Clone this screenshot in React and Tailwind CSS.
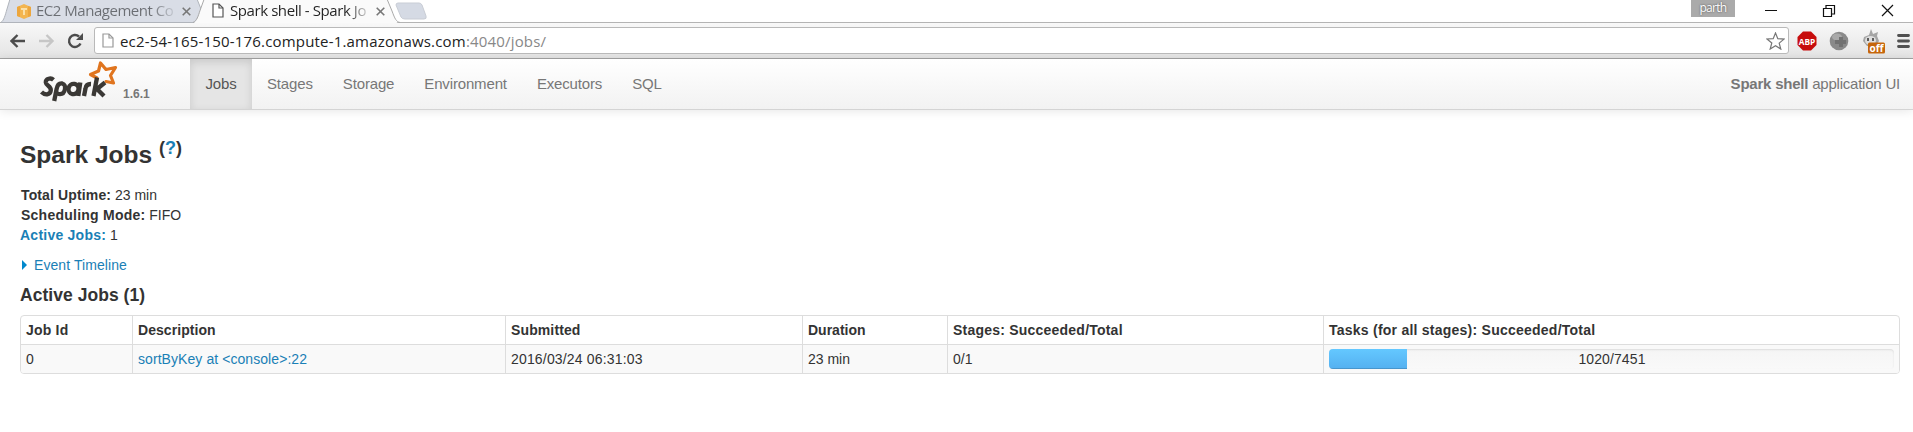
const navItems = ["Stages", "Storage", "Environment", "Executors", "SQL"];

function PageIcon({ className }) {
  return (
    <svg className={className} width="12" height="15" viewBox="0 0 12 15" fill="#fff" stroke="currentColor" strokeWidth="1.2">
      <path d="M1 1h6l4 4v9H1z" />
      <path d="M7 1v4h4" fill="none" />
    </svg>
  );
}

function CloseX() {
  return (
    <svg width="9" height="9" viewBox="0 0 9 9" stroke="#777" strokeWidth="1.6">
      <path d="M.7 .7L8.3 8.3M8.3 .7L.7 8.3" />
    </svg>
  );
}

function TabStrip() {
  return (
    <div className="relative flex h-[23px] items-start bg-white">
      <svg className="absolute left-0 top-0" width="1913" height="23" viewBox="0 0 1913 23">
        <path d="M0 22.5H1913" stroke="#b4b4b4" />
        <path d="M1 22.5C4 20 5 16 7 9L10-1H197l4 10c2 8 3 11 7 13.5z" fill="#d9dde6" stroke="#b0b4bb" />
        <path d="M193 23.5c4-2 5-6 7-12l4-12H387l5 12c3 9 4 11 7 12z" fill="#fafafa" />
        <path d="M193 22.5c4-2 5-6 7-12l4-11M387-1l5 12c3 8 4 10.500 8 11.500" fill="none" stroke="#a9a9a9" />
        <path d="M396 5q0-2 2-2h21q2 0 3 2l4 11q1 3-2 3h-19q-3 0-4-2z" fill="#d5dae4" stroke="#c9cdd5" />
      </svg>
      <div className="relative ml-[16px] mt-[4px] flex h-[14px] items-center">
        <svg width="16" height="15" viewBox="0 0 16 15">
          <path d="M1 3l7-3 7 3v9l-7 3-7-3z" fill="#f3b550" />
          <path d="M1 3l3-1v11l-3-1zM15 3l-3-1v11l3-1z" fill="#eda63c" />
          <path d="M5 4h6v2H9v5H7V6H5z" fill="#fbe0a8" />
        </svg>
      </div>
      <div className="relative ml-[4px] h-[22px] w-[143px] whitespace-nowrap bg-gradient-to-r from-[#6b6e73] from-80% to-transparent bg-clip-text font-['Open_Sans',sans-serif] text-[15px] leading-[21px] tracking-[-0.48px] text-transparent">EC2 Management Co</div>
      <div className="relative ml-[3px] mt-[7px]"><CloseX /></div>
      <PageIcon className="relative ml-[21px] mt-[3px] text-[#555]" />
      <div className="relative ml-[6px] h-[22px] w-[139px] whitespace-nowrap bg-gradient-to-r from-[#222] from-84% to-transparent to-102% bg-clip-text font-['Open_Sans',sans-serif] text-[15px] leading-[21px] tracking-[-0.42px] text-transparent">Spark shell - Spark Jo</div>
      <div className="relative ml-[7px] mt-[7px]"><CloseX /></div>
      <div className="relative ml-auto mr-[178px] flex h-[17px] w-[44px] items-start justify-center bg-[#aaa] font-['Open_Sans',sans-serif] text-[12px] leading-[16px] tracking-[-0.7px] text-white [text-shadow:0_0_2px_#444]">parth</div>
      <svg className="absolute right-[19px] top-[4px]" width="130" height="14" viewBox="0 0 130 14" fill="none" stroke="#111" strokeWidth="1.2">
        <path d="M1 6.500h12M59.500 4.500h8v8h-8zM62 4V1.500h8.500V10H68" />
        <path d="M118 1l11 11M129 1l-11 11" />
      </svg>
    </div>
  );
}

function Toolbar() {
  return (
    <div className="flex h-[36px] items-center border-b border-[#a3a3a3] bg-gradient-to-b from-[#f8f8f8] to-[#e4e4e4]">
      <svg className="ml-[10px]" width="74" height="18" viewBox="0 0 74 18" fill="none" strokeWidth="2.4">
        <path d="M15 9H2M7.500 3L1.500 9l6 6" stroke="#4c4c4c" />
        <path d="M29 9h13M36.500 3l6 6-6 6" stroke="#c6c6c6" />
        <path d="M70.500 11.500A6 6 0 1 1 69 4.500" stroke="#4c4c4c" />
        <path d="M73 1v7h-7z" fill="#4c4c4c" />
      </svg>
      <div className="ml-[10px] flex h-[27px] w-[1695px] items-center rounded-[3px] border border-[#b9b9b9] bg-white pl-[7px] pr-[3px]">
        <PageIcon className="text-[#999]" />
        <div className="ml-[6px] flex-1 whitespace-nowrap font-['Open_Sans',sans-serif] text-[15px] leading-[24px] tracking-[0.18px] text-[#222]">
          ec2-54-165-150-176.compute-1.amazonaws.com<span className="text-[#888]">:4040/jobs/</span>
        </div>
        <svg width="19" height="18" viewBox="0 0 19 18" fill="#fff" stroke="#777" strokeWidth="1.2">
          <path d="M9.500 1l2.300 5.700 6.200.4-4.800 4 1.600 6-5.300-3.400L4.200 17l1.600-6-4.800-4 6.200-.3z" />
        </svg>
      </div>
      <svg className="ml-[8px]" width="20" height="20" viewBox="0 0 20 20">
        <path d="M6 .5h8L19.500 6v8L14 19.500H6L.5 14V6z" fill="#c70d0d" />
        <text x="10" y="13.5" textAnchor="middle" fill="#fff" fontFamily="Open Sans, sans-serif" fontWeight="700" fontSize="9" textLength="16.5" lengthAdjust="spacingAndGlyphs">ABP</text>
      </svg>
      <svg className="ml-[12px]" width="20" height="20" viewBox="0 0 20 20">
        <circle cx="10" cy="10" r="9.3" fill="#8a8a8a" />
        <ellipse cx="8" cy="6" rx="5" ry="3.5" fill="#a9a9a9" />
        <path d="M10 6h4v3h3v4h-3v3h-4v-3H6V9h4z" fill="#727272" />
      </svg>
      <svg className="ml-[13px]" width="24" height="26" viewBox="0 0 24 26">
        <path d="M2 9l5-2 2-6 2 5 5-2-1 4 2 5-3 5H5L1 13z" fill="#a5a5a5" />
        <ellipse cx="8.500" cy="12.500" rx="5.500" ry="4.500" fill="#dedede" />
        <path d="M6 10v3M11 10v3" stroke="#333" strokeWidth="1.5" />
        <rect x="6" y="14.500" width="17" height="11" rx="1.500" fill="#c6660b" />
        <text x="14.500" y="23.500" textAnchor="middle" fill="#fff" fontFamily="Open Sans, sans-serif" fontWeight="700" fontSize="10.5" textLength="14" lengthAdjust="spacingAndGlyphs">off</text>
      </svg>
      <svg className="ml-[11px]" width="13" height="14" viewBox="0 0 13 14" stroke="#505050" strokeWidth="2.8" strokeLinecap="round">
        <path d="M1.500 1.500h10M1.500 7h10M1.500 12.500h10" />
      </svg>
    </div>
  );
}

function SparkLogo() {
  return (
    <svg width="80" height="42" viewBox="0 0 80 42" fill="none" strokeLinejoin="round">
      <path d="M57.500 21L58 18L51.500 14.500L59.500 11L61.500 3L67 9.500L76.500 7.500L71.500 15.500L74.500 23L67 21.500" stroke="#e0751f" strokeWidth="3.2" strokeLinecap="round" />
      <g stroke="#3a3835" strokeWidth="4.3">
        <path d="M14.500 19.800C12 17.500 6.500 18.500 6.800 22.500C7.200 26 12.300 26 11.800 30.500C11.200 35 6 35.500 2.500 32" />
        <path d="M15.200 41L17.600 29C18.400 24.500 21 23.200 23.300 23.500C28 24.500 26.500 34.200 21 34.200Q18.600 34.200 17.600 32.500" />
        <ellipse cx="34.500" cy="29" rx="5" ry="5.200" transform="rotate(12 34.500 29)" />
        <path d="M41.300 22.500L39.300 36M45 36L46.500 28.500Q47.300 23.800 52 24M54.500 36L58 17.500M66 22.500L58 29L65 36" />
      </g>
    </svg>
  );
}

function Navbar() {
  return (
    <div className="flex h-[51px] border-b border-[#d4d4d4] bg-gradient-to-b from-white to-[#f2f2f2] font-['Liberation_Sans',Arial,sans-serif] text-[15px] tracking-[-0.15px] text-[#777] shadow-[0_1px_10px_rgba(0,0,0,0.1)]">
      <div className="flex w-[190px] pl-[39px] pt-px">
        <SparkLogo />
        <span className="ml-[4px] mt-[26px] text-[12px] font-bold leading-[16px] tracking-normal">1.6.1</span>
      </div>
      <div className="flex w-[62px] items-center justify-center bg-[#e5e5e5] text-[#555] shadow-[inset_0_3px_8px_rgba(0,0,0,0.125)]">Jobs</div>
      {navItems.map((n) => (
        <div key={n} className="flex items-center px-[15px]">{n}</div>
      ))}
      <div className="ml-auto flex items-center pr-[13px] tracking-[-0.22px]"><b>Spark shell</b>&nbsp;application UI</div>
    </div>
  );
}

const cell = "border-l border-[#ddd] px-[5px] first:border-l-0";

export default function App() {
  return (
    <div className="h-[432px] w-[1913px] overflow-hidden bg-white">
      <TabStrip />
      <Toolbar />
      <Navbar />
      <main className="pl-[20px] pr-[13px] font-['Liberation_Sans',Arial,sans-serif] text-[14px] leading-[20px] text-[#333]">
        <h3 className="flex pt-[25px] text-[24.5px] font-bold leading-[40px]">
          Spark Jobs
          <span className="-mt-[7px] ml-[7px] text-[18px]">(<span className="text-[#1a80b6]">?</span>)</span>
        </h3>
        <ul className="ml-px mt-[10px]">
          <li><b className="tracking-[0.13px]">Total Uptime:</b> 23 min</li>
          <li><b className="tracking-[0.24px]">Scheduling Mode:</b> FIFO</li>
          <li><b className="-ml-px tracking-[0.24px] text-[#1a80b6]">Active Jobs:</b> 1</li>
        </ul>
        <div className="mt-[10px] flex items-center tracking-[0.08px] text-[#1a80b6]">
          <svg className="ml-[2px] mr-[7px]" width="5" height="10" viewBox="0 0 5 10" fill="#0088cc"><path d="M0 0l5 5-5 5z" /></svg>
          Event Timeline
        </div>
        <h4 className="mt-[10px] text-[17.5px] font-bold leading-[20px] tracking-[0.04px]">Active Jobs (1)</h4>
        <div className="mt-[10px] overflow-hidden rounded-[4px] border border-[#ddd]">
          <div className="grid h-[28px] grid-cols-[111px_373px_297px_145px_376px_1fr] font-bold leading-[28px]">
            <div className={cell + " tracking-[0.2px]"}>Job Id</div>
            <div className={cell + " tracking-[0.06px]"}>Description</div>
            <div className={cell + " tracking-[0.12px]"}>Submitted</div>
            <div className={cell}>Duration</div>
            <div className={cell + " tracking-[0.22px]"}>Stages: Succeeded/Total</div>
            <div className={cell + " tracking-[0.24px]"}>Tasks (for all stages): Succeeded/Total</div>
          </div>
          <div className="grid h-[29px] grid-cols-[111px_373px_297px_145px_376px_1fr] border-t border-[#ddd] bg-[#f9f9f9] leading-[28px]">
            <div className={cell}>0</div>
            <div className={cell + " tracking-[0.07px] text-[#1a80b6]"}>sortByKey at &lt;console&gt;:22</div>
            <div className={cell + " tracking-[0.17px]"}>2016/03/24 06:31:03</div>
            <div className={cell}>23 min</div>
            <div className={cell}>0/1</div>
            <div className={cell + " pt-[4px]"}>
              <div className="grid h-[20px] overflow-hidden rounded-[4px] bg-gradient-to-b from-[#f5f5f5] to-[#f9f9f9] leading-[20px] shadow-[inset_0_1px_2px_rgba(0,0,0,0.1)]">
                <div className="col-start-1 row-start-1 h-full w-[78px] bg-gradient-to-b from-[#64c8ff] to-[#54b0f0] shadow-[inset_0_-1px_0_rgba(0,0,0,0.15)]" />
                <span className="col-start-1 row-start-1 pl-px text-center tracking-[0.1px]">1020/7451</span>
              </div>
            </div>
          </div>
        </div>
      </main>
    </div>
  );
}
